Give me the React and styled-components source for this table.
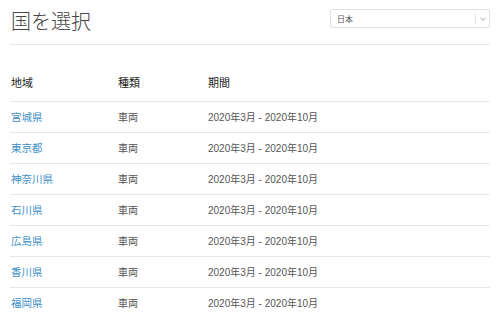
import styled, { createGlobalStyle } from 'styled-components';

const GlobalStyle = createGlobalStyle`
  body {
    margin: 0;
    background: #fff;
    font-family: "Liberation Sans", "Noto Sans CJK JP", sans-serif;
    color: #333;
  }
`;

const rows = ['宮城県', '東京都', '神奈川県', '石川県', '広島県', '香川県', '福岡県'];

const App = () => {
  return (
    <Page>
      <GlobalStyle />
      <Header>
        <Title>国を選択</Title>
        <Select>
          <span>日本</span>
          <Caret>
            <svg width="6" height="4" viewBox="0 0 6 4">
              <path d="M0.5 0.8 L3 3.2 L5.5 0.8" fill="none" stroke="#999" strokeWidth="0.9" />
            </svg>
          </Caret>
        </Select>
      </Header>
      <Table>
        <thead>
          <tr>
            <Th>地域</Th>
            <Th>種類</Th>
            <Th>期間</Th>
          </tr>
        </thead>
        <tbody>
          {rows.map((r) => (
            <tr key={r}>
              <Td><Link>{r}</Link></Td>
              <Td>車両</Td>
              <Td>2020年3月 - 2020年10月</Td>
            </tr>
          ))}
        </tbody>
      </Table>
    </Page>
  );
};

const Page = styled.div`
  padding: 0 10px;
  width: 480px;
`;

const Header = styled.div`
  display: flex;
  justify-content: space-between;
  align-items: flex-start;
  height: 44px;
  border-bottom: 1px solid #e6e6e6;
`;

const Title = styled.h1`
  margin: 7px 0 0 1px;
  font-size: 20px;
  font-weight: 300;
  line-height: 28px;
  color: #444;
  font-family: "Noto Sans CJK JP", sans-serif;
`;

const Select = styled.div`
  margin-top: 9px;
  width: 158px;
  height: 17px;
  border: 1px solid #e0e0e0;
  border-radius: 2px;
  display: flex;
  align-items: center;
  justify-content: space-between;
  box-sizing: content-box;
  font-size: 8px;
  font-family: "Noto Sans CJK JP", sans-serif;
  color: #555;
  span {
    padding-left: 6px;
  }
`;

const Caret = styled.div`
  width: 13px;
  height: 11px;
  border-left: 1px solid #e6e6e6;
  display: flex;
  align-items: center;
  justify-content: center;
`;

const Table = styled.table`
  width: 100%;
  border-collapse: collapse;
  font-size: 10px;
`;

const Th = styled.th`
  text-align: left;
  font-weight: 400;
  color: #222;
  height: 56px;
  padding: 18px 0 0 1px;
  box-sizing: border-box;
  border-bottom: 1px solid #e6e6e6;
  font-size: 11px;
  &:nth-child(1) { width: 107px; }
  &:nth-child(2) { width: 90px; }
`;

const Td = styled.td`
  height: 31px;
  padding: 0 0 0 1px;
  box-sizing: border-box;
  border-bottom: 1px solid #e6e6e6;
  color: #555;
  font-weight: 400;
`;

const Link = styled.a`
  color: #3f8fc8;
  font-size: 10.5px;
`;

export default App;
